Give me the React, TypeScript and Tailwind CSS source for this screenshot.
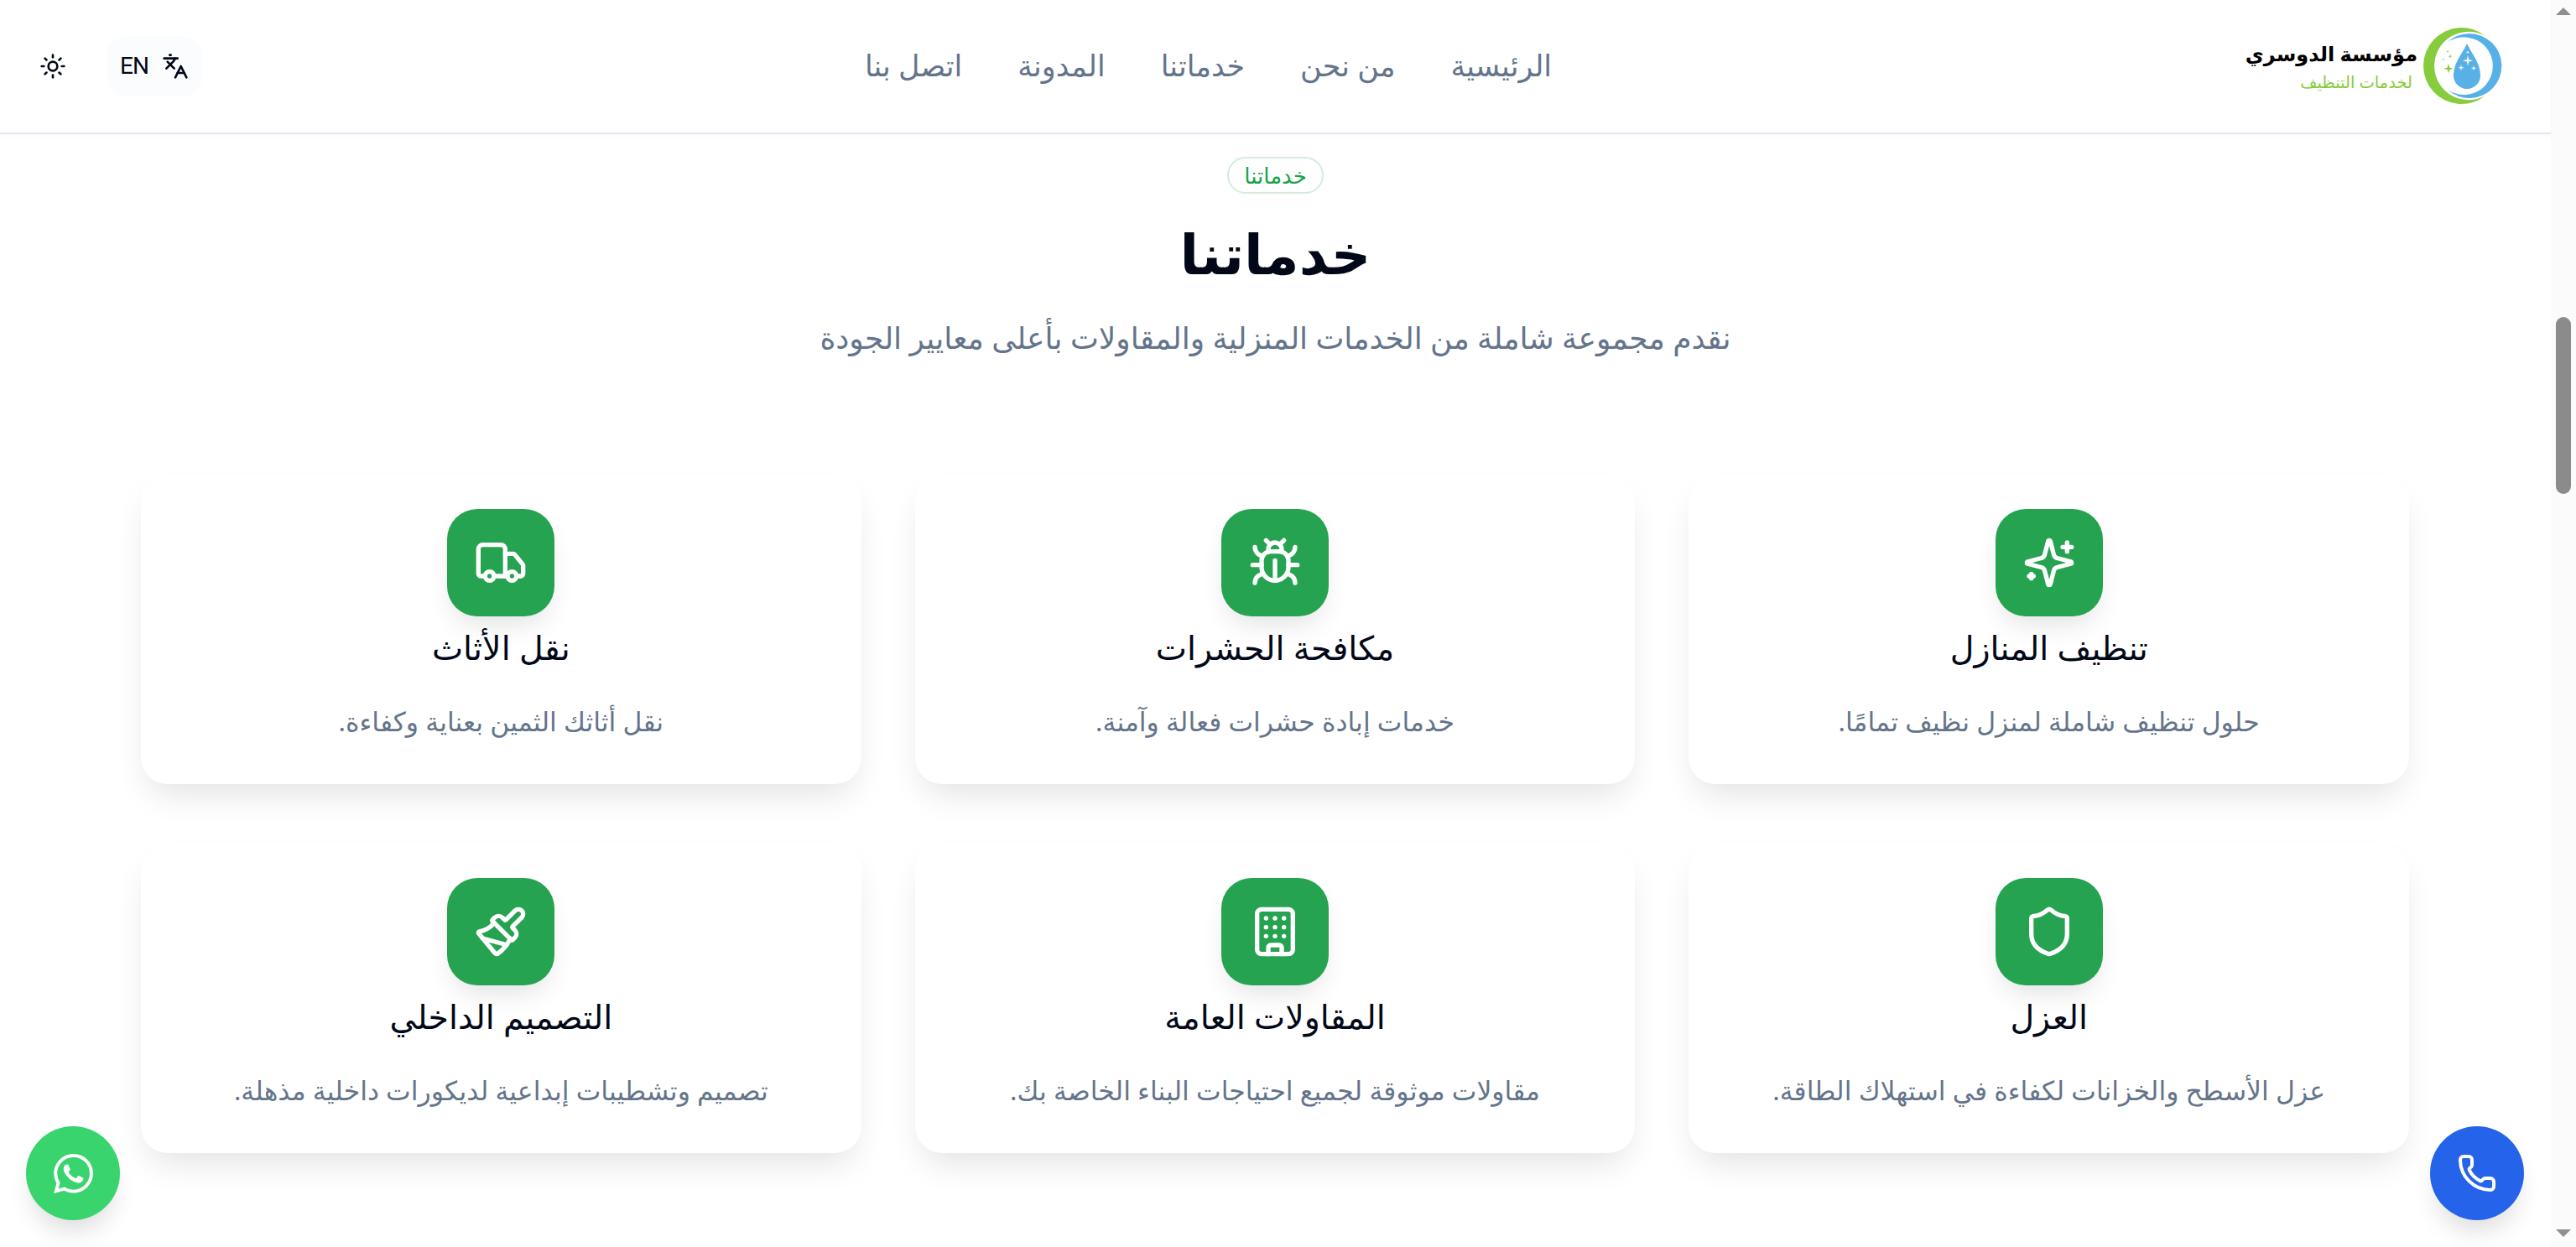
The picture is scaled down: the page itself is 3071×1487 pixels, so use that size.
import React from 'react';
import { Sun, Languages, Bug, Truck, Shield, Building, Paintbrush, Phone } from 'lucide-react';
import { SiWhatsapp } from 'react-icons/si';

const navLinks = ['الرئيسية', 'من نحن', 'خدماتنا', 'المدونة', 'اتصل بنا'];

// lucide's current Sparkles moved the star off centre, the page uses the older one
const SparklesIcon = ({ size }: { size: number }) => (
    <svg width={size} height={size} viewBox="0 0 24 24" fill="none" stroke="currentColor" strokeWidth="2" strokeLinecap="round" strokeLinejoin="round">
        <path d="M9.937 15.5A2 2 0 0 0 8.5 14.063l-6.135-1.582a.5.5 0 0 1 0-.962L8.5 9.936A2 2 0 0 0 9.937 8.5l1.582-6.135a.5.5 0 0 1 .963 0L14.063 8.5A2 2 0 0 0 15.5 9.937l6.135 1.581a.5.5 0 0 1 0 .964L15.5 14.063a2 2 0 0 0-1.437 1.437l-1.582 6.135a.5.5 0 0 1-.963 0z" />
        <path d="M20 3v4" />
        <path d="M22 5h-4" />
        <path d="M4 17v2" />
        <path d="M5 18H3" />
    </svg>
);

const services = [
    { title: 'تنظيف المنازل', text: 'حلول تنظيف شاملة لمنزل نظيف تمامًا.', Icon: SparklesIcon },
    { title: 'مكافحة الحشرات', text: 'خدمات إبادة حشرات فعالة وآمنة.', Icon: Bug },
    { title: 'نقل الأثاث', text: 'نقل أثاثك الثمين بعناية وكفاءة.', Icon: Truck },
    { title: 'العزل', text: 'عزل الأسطح والخزانات لكفاءة في استهلاك الطاقة.', Icon: Shield },
    { title: 'المقاولات العامة', text: 'مقاولات موثوقة لجميع احتياجات البناء الخاصة بك.', Icon: Building },
    { title: 'التصميم الداخلي', text: 'تصميم وتشطيبات إبداعية لديكورات داخلية مذهلة.', Icon: Paintbrush },
];

const LogoMark = () => (
    <svg width="100" height="92" viewBox="0 0 100 92" className="shrink-0">
        <path d="M78 10A45.5 45.5 0 1 0 78 81A40.8 40.8 0 1 1 78 10Z" fill="#86cc3c" />
        <path d="M32 18A38.5 38.5 0 1 1 33 74A34.4 34.4 0 1 0 32 18Z" fill="#57b0e6" />
        <path d="M56 19C50 32 40 42 40 57A16 16 0 0 0 72 57C72 42 62 32 56 19Z" fill="#57b0e6" />
        <path d="M57 33l1.2 5 5 1.2-5 1.2-1.2 5-1.2-5-5-1.2 5-1.2ZM49 44l.8 3 3 .8-3 .8-.8 3-.8-3-3-.8 3-.8ZM64 45l.7 2.5 2.5.7-2.5.7-.7 2.5-.7-2.5-2.5-.7 2.5-.7ZM57 27l.5 1.8 1.8.5-1.8.5-.5 1.8-.5-1.8-1.8-.5 1.8-.5Z" fill="#ffffff" />
        <path d="M34 43l1.3 4.4 4.4 1.3-4.4 1.3-1.3 4.4-1.3-4.4-4.4-1.3 4.4-1.3ZM36 32l.6 1.6 1.6.6-1.6.6-.6 1.6-.6-1.6-1.6-.6 1.6-.6ZM28 36l.4 1.2 1.2.4-1.2.4-.4 1.2-.4-1.2-1.2-.4 1.2-.4ZM33 27l.4 1.1 1.1.4-1.1.4-.4 1.1-.4-1.1-1.1-.4 1.1-.4Z" fill="#86cc3c" />
    </svg>
);

const Header = () => (
    <header className="h-40 shrink-0 flex items-center justify-between bg-white border-b-2 border-[#e2e8f0] pl-[47px] pr-[56px] shadow-[0_2px_4px_rgba(0,0,0,0.03)]">
        <div className="w-[345px] flex items-center gap-[3px]">
            <LogoMark />
            <div className="flex flex-col items-start">
                <span className="text-[24px] leading-[38px] font-bold text-black whitespace-nowrap">مؤسسة الدوسري</span>
                <span className="text-[19.5px] leading-[30px] text-[#86cc3c] whitespace-nowrap mr-[6px]">لخدمات التنظيف</span>
            </div>
        </div>
        <nav className="flex items-center gap-[66px] pb-[3px]">
            {navLinks.map(link => (
                <a key={link} className="text-[35px] leading-[48px] text-[#64748b] whitespace-nowrap">{link}</a>
            ))}
        </nav>
        <div className="flex items-center gap-[48px]">
            <button className="h-[72px] w-[114px] rounded-3xl bg-[#fbfcfe] flex items-center justify-center gap-4 text-[#020817]">
                <Languages size={32} />
                <span dir="ltr" className="text-[28px] leading-[36px] tracking-[-1px] font-['Roboto',sans-serif]">EN</span>
            </button>
            <button className="text-[#020817]">
                <Sun size={32} />
            </button>
        </div>
    </header>
);

const ServiceCard = ({ title, text, Icon }: { title: string; text: string; Icon: React.ElementType }) => (
    <div className="h-[368px] rounded-[32px] bg-white pt-10 flex flex-col items-center shadow-[0_20px_40px_-10px_rgba(0,0,0,0.12)]">
        <div className="w-32 h-32 rounded-[36px] bg-[#26a350] flex items-center justify-center text-white shadow-[0_16px_32px_-8px_rgba(0,0,0,0.12)]">
            <Icon size={64} />
        </div>
        <h3 className="mt-[9px] text-[39.5px] leading-[56px] text-[#020817] font-medium">{title}</h3>
        <p className="mt-9 text-[31.5px] leading-[48px] text-[#64748b]">{text}</p>
    </div>
);

const Scrollbar = () => (
    <aside className="w-[30px] shrink-0 bg-[#fbfbfb] flex flex-col items-center h-full">
        <svg width="18" height="9" viewBox="0 0 18 9" className="mt-[9px] shrink-0"><path d="M9 0l9 9H0Z" fill="#8f8f8f" /></svg>
        <div className="mt-[360px] w-[18px] h-[211px] rounded-full bg-[#8b8b8b]" />
        <div className="flex-1" />
        <svg width="18" height="9" viewBox="0 0 18 9" className="mb-[12px] shrink-0"><path d="M0 0h18L9 9Z" fill="#8f8f8f" /></svg>
    </aside>
);

export default function App() {
    return (
        <div dir="rtl" className="relative h-[1487px] w-full overflow-hidden flex bg-white font-['Noto_Sans','DejaVu_Sans',sans-serif]">
            <Scrollbar />
            <main className="flex-1 flex flex-col min-w-0">
                <Header />
                <section className="flex-1 flex flex-col items-center pt-[27px]">
                    <span className="h-11 w-[115px] rounded-full border-2 border-[#d3ecdc] text-[26px] text-[#16a34a] flex items-center justify-center">خدماتنا</span>
                    <h1 className="mt-[22px] text-[66px] leading-[96px] font-bold text-[#020817]">خدماتنا</h1>
                    <p className="mt-6 text-[36px] leading-[60px] text-[#64748b]">نقدم مجموعة شاملة من الخدمات المنزلية والمقاولات بأعلى معايير الجودة</p>
                    <div className="mt-[134px] mr-px w-[2704px] grid grid-cols-3 gap-x-16 gap-y-[72px]">
                        {services.map(s => (
                            <ServiceCard key={s.title} {...s} />
                        ))}
                    </div>
                </section>
            </main>
            <a className="absolute left-[31px] top-[1343px] w-28 h-28 rounded-full bg-[#39d46e] flex items-center justify-center text-white shadow-[0_20px_30px_-8px_rgba(0,0,0,0.14)]">
                <SiWhatsapp size={47} />
            </a>
            <a className="absolute left-[2897px] top-[1343px] w-28 h-28 rounded-full bg-[#2563eb] flex items-center justify-center text-white shadow-[0_20px_30px_-8px_rgba(0,0,0,0.14)]">
                <Phone size={48} />
            </a>
        </div>
    );
}
